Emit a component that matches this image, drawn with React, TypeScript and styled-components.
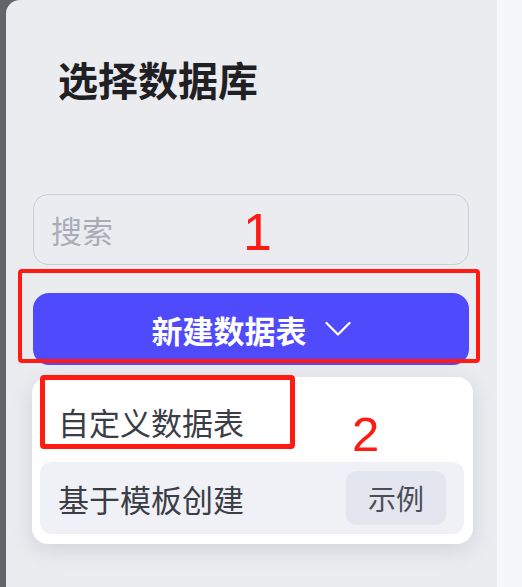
import React from "react";
import styled, { createGlobalStyle } from "styled-components";

const Global = createGlobalStyle`
  html, body { margin: 0; padding: 0; }
  body {
    width: 522px;
    height: 587px;
    overflow: hidden;
    font-family: "Noto Sans CJK SC", "Noto Sans", sans-serif;
  }
`;

const Page = styled.div`
  display: flex;
  width: 522px;
  height: 587px;
  background: #636369;
`;

const LeftEdge = styled.div`
  width: 6px;
  flex: none;
`;

const Panel = styled.section`
  position: relative;
  flex: none;
  width: 491px;
  box-sizing: border-box;
  background: #ebecf0;
  border-top-left-radius: 14px;
  padding: 55px 28px 0 27px;
  display: flex;
  flex-direction: column;
`;

const RightStrip = styled.div`
  flex: 1;
  background: #f6f7f9;
`;

const Title = styled.h1`
  margin: 0 0 0 25px;
  font-size: 40px;
  line-height: 48px;
  font-weight: 700;
  color: #1f2024;
`;

const Search = styled.div`
  margin-top: 91px;
  height: 71px;
  box-sizing: border-box;
  border: 1.5px solid #c9cdd8;
  border-radius: 15px;
  display: flex;
  align-items: center;
  padding-left: 17px;
  font-size: 31px;
  color: #a9acb8;
`;

const CreateButton = styled.button`
  margin-top: 28px;
  height: 72px;
  border: none;
  border-radius: 16px;
  background: #4f4afb;
  color: #ffffff;
  font-family: inherit;
  font-size: 31px;
  font-weight: 700;
  display: flex;
  align-items: center;
  justify-content: center;
  gap: 18px;
  padding: 0;
`;

const Menu = styled.div`
  margin: 12px -4px 0 -1px;
  background: #ffffff;
  border-radius: 16px;
  box-shadow: 0 6px 22px rgba(30, 35, 60, 0.12);
  padding: 8px 9px 10px 8px;
  display: flex;
  flex-direction: column;
  gap: 5px;
`;

const MenuItem = styled.div<{ $active?: boolean }>`
  height: 72px;
  border-radius: 12px;
  background: ${(p) => (p.$active ? "#f0f1f6" : "transparent")};
  display: flex;
  align-items: center;
  justify-content: space-between;
  padding: 0 18px 0 18px;
  font-size: 31px;
  color: #3b3d46;
`;

const Tag = styled.span`
  height: 54px;
  padding: 0 22px;
  border-radius: 10px;
  background: #e4e6ef;
  display: flex;
  align-items: center;
  font-size: 28px;
  color: #4a4d58;
`;

const Mark = styled.div<{ $x: number; $y: number; $w: number; $h: number; $t: number }>`
  position: absolute;
  left: ${(p) => p.$x}px;
  top: ${(p) => p.$y}px;
  width: ${(p) => p.$w}px;
  height: ${(p) => p.$h}px;
  box-sizing: border-box;
  border: ${(p) => p.$t}px solid #ff1a12;
  border-radius: 4px;
  pointer-events: none;
`;

const Number = styled.span<{ $x: number; $y: number; $size: number }>`
  position: absolute;
  left: ${(p) => p.$x}px;
  top: ${(p) => p.$y}px;
  font-family: "Liberation Sans", Arial, sans-serif;
  font-size: ${(p) => p.$size}px;
  line-height: 1;
  color: #ff1a12;
`;

const Chevron = () => (
  <svg width="26" height="16" viewBox="0 0 26 16" fill="none">
    <polyline
      points="1.5,2 13,13.5 24.5,2"
      stroke="#ffffff"
      strokeWidth="2.2"
      strokeLinecap="round"
      strokeLinejoin="round"
    />
  </svg>
);

export default function App() {
  return (
    <>
      <Global />
      <Page>
        <LeftEdge />
        <Panel>
          <Title>选择数据库</Title>
          <Search>搜索</Search>
          <CreateButton>
            新建数据表
            <Chevron />
          </CreateButton>
          <Menu>
            <MenuItem>自定义数据表</MenuItem>
            <MenuItem $active>
              基于模板创建
              <Tag>示例</Tag>
            </MenuItem>
          </Menu>
          <Mark $x={12} $y={269} $w={462} $h={94} $t={4} />
          <Mark $x={34} $y={375} $w={255} $h={74} $t={5} />
          <Number $x={237} $y={206} $size={52}>1</Number>
          <Number $x={346} $y={410} $size={49}>2</Number>
        </Panel>
        <RightStrip />
      </Page>
    </>
  );
}
